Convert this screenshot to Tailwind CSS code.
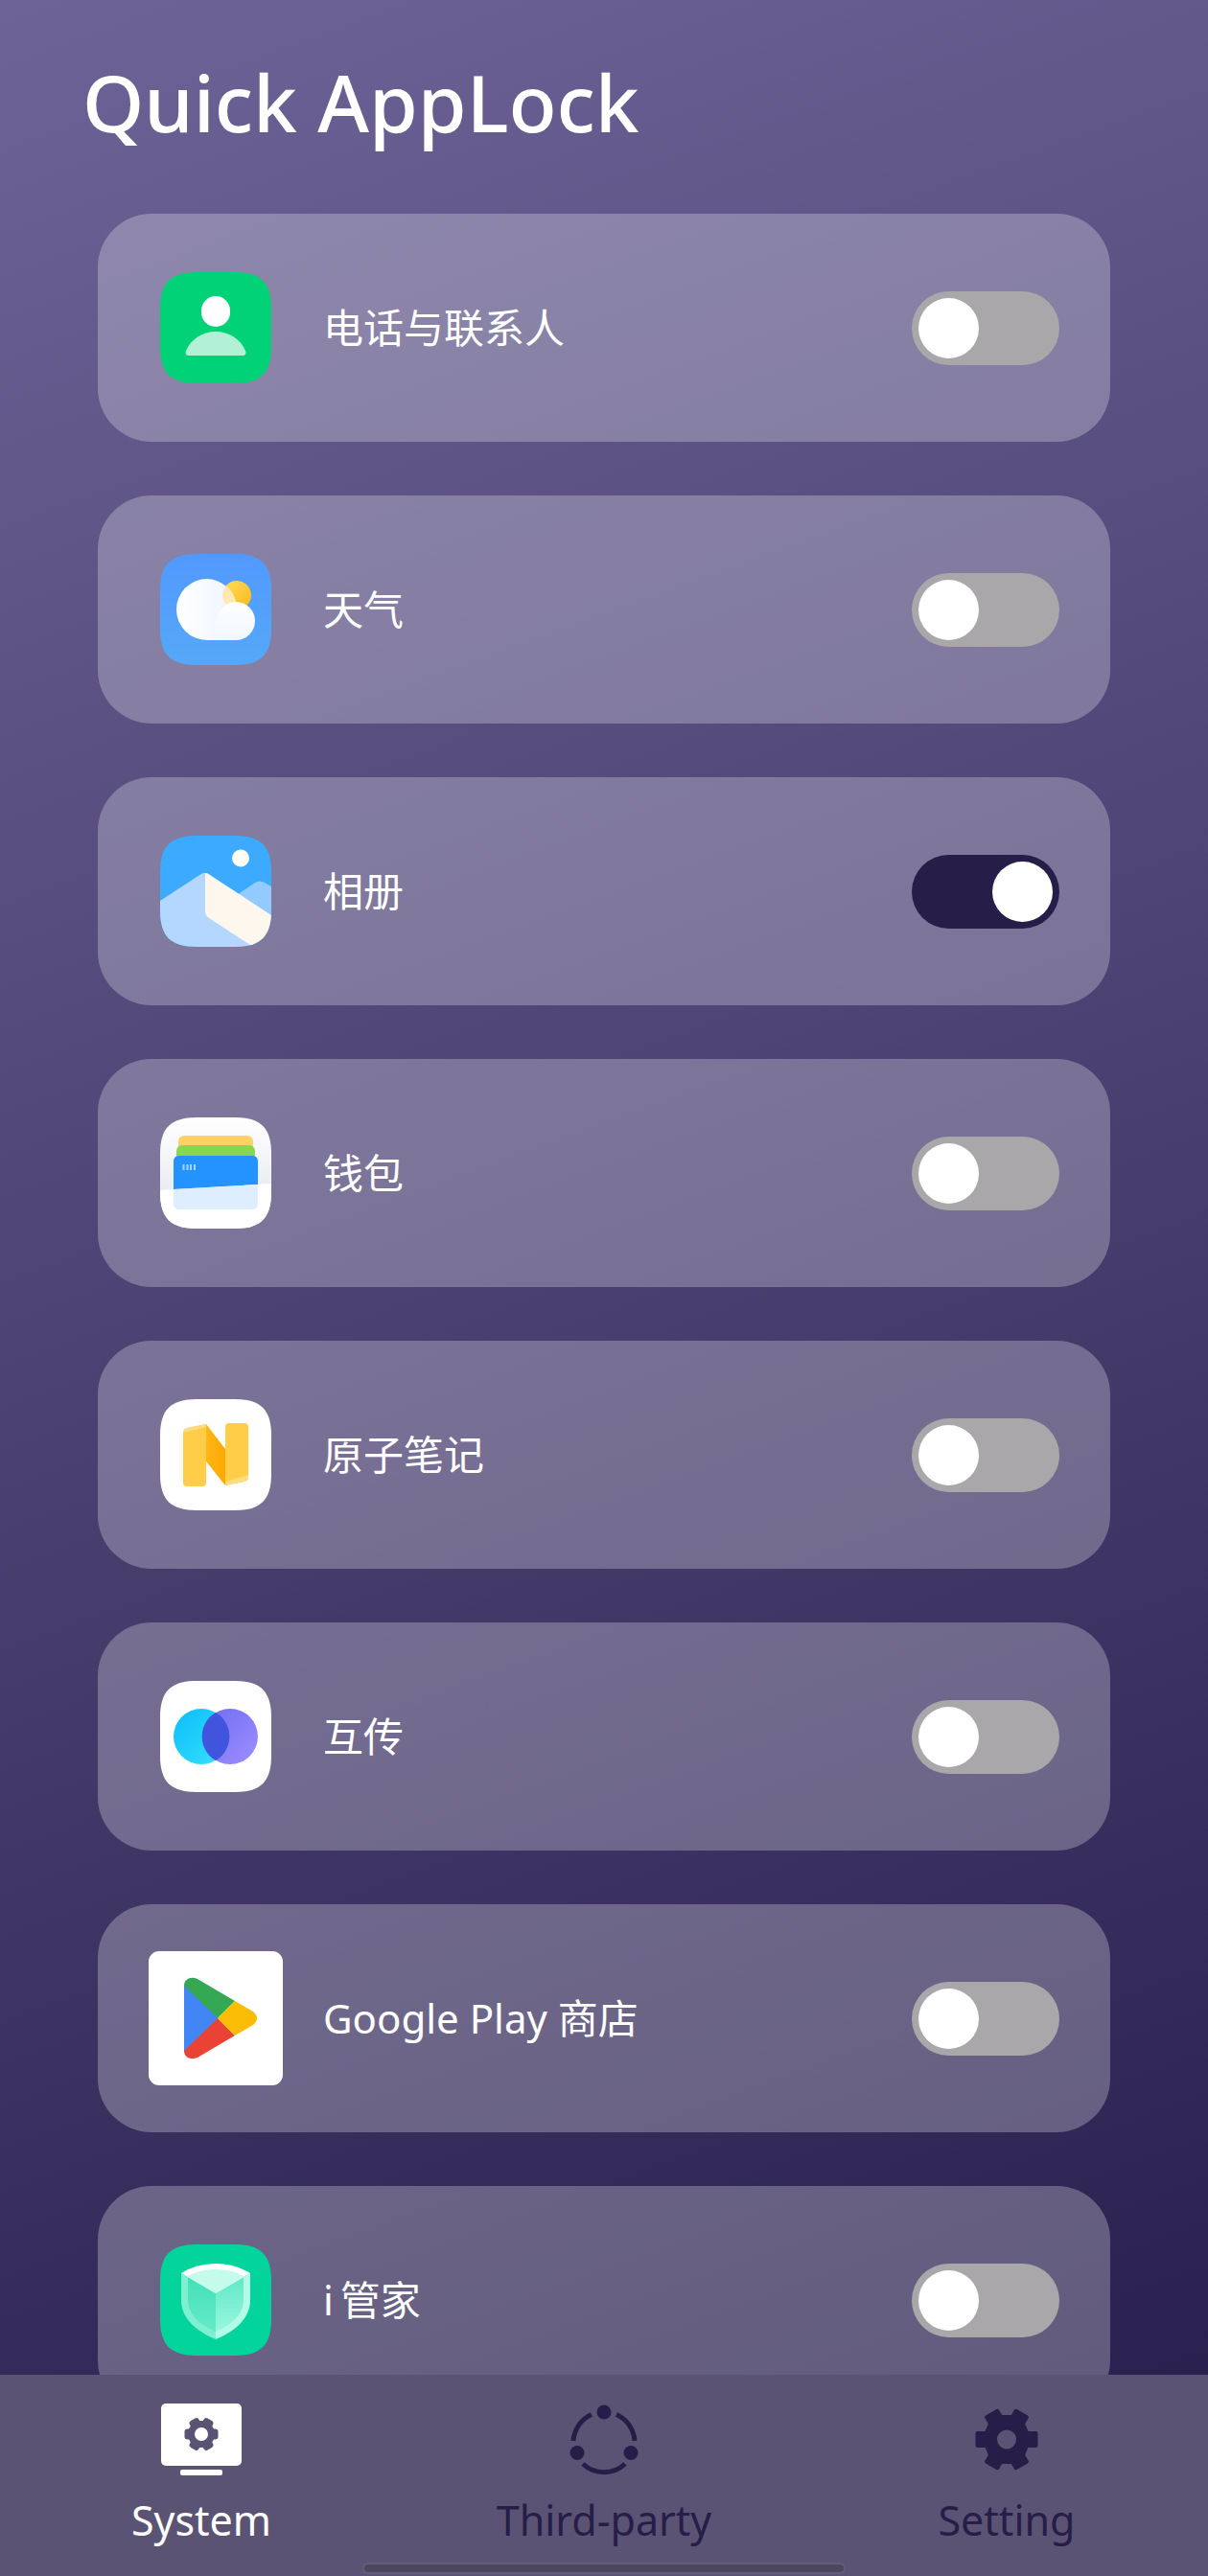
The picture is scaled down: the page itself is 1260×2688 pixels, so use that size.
<!DOCTYPE html>
<html lang="zh-CN">

<head>
    <meta charset="UTF-8">
    <meta name="viewport" content="width=device-width, initial-scale=1.0">
    <title>Quick AppLock</title>
    <script src="https://cdn.jsdelivr.net/npm/@tailwindcss/browser@4"></script>
</head>

<body class="flex h-screen flex-col overflow-hidden bg-[linear-gradient(160deg,#6d6396,#251c4a)] font-['Noto_Sans','Noto_Sans_CJK_SC',sans-serif] text-white">
    <!-- Shared shapes -->
    <svg class="absolute size-0" aria-hidden="true">
        <defs>
            <path id="tile" d="M0 38C0 11 11 0 38 0H78C105 0 116 11 116 38V78C116 105 105 116 78 116H38C11 116 0 105 0 78Z" />
            <clipPath id="tileClip"><use href="#tile" /></clipPath>
            <linearGradient id="weatherBg" x2="0" y2="1"><stop stop-color="#5299ff" /><stop offset="1" stop-color="#55a8f8" /></linearGradient>
            <linearGradient id="sun" x2="1" y2="1"><stop stop-color="#ffdc5e" /><stop offset="1" stop-color="#fbb917" /></linearGradient>
            <linearGradient id="cloud" x2="1" y2="0"><stop stop-color="#ffffff" /><stop offset="1" stop-color="#eef4fe" /></linearGradient>
            <linearGradient id="cloudSmall" x2="0" y2="1"><stop stop-color="#ffffff" /><stop offset="1" stop-color="#eff7ff" /></linearGradient>
            <linearGradient id="walletBg" x2="0" y2="1"><stop stop-color="#ffffff" /><stop offset="0.7" stop-color="#e9ebf2" /></linearGradient>
            <linearGradient id="fold" x2="1" y2="0"><stop stop-color="#ffb618" /><stop offset="1" stop-color="#fca800" /></linearGradient>
            <linearGradient id="cyan" x2="1" y2="1"><stop stop-color="#0bbdfb" /><stop offset="1" stop-color="#39e2fb" /></linearGradient>
            <linearGradient id="violet" x2="1" y2="1"><stop stop-color="#6c6cf2" /><stop offset="1" stop-color="#9f8fff" /></linearGradient>
            <linearGradient id="shieldLeft" x2="0" y2="1"><stop stop-color="#44e0b8" /><stop offset="1" stop-color="#64ebc8" /></linearGradient>
            <linearGradient id="shieldRight" x2="0" y2="1"><stop stop-color="#62e8c8" /><stop offset="1" stop-color="#98f7de" /></linearGradient>
        </defs>
    </svg>

    <h1 class="px-[86px] pt-[46px] text-[82px] leading-[120px] font-medium">Quick AppLock</h1>

    <!-- App list -->
    <main class="min-h-0 flex-1 overflow-y-auto px-[102px] pt-[57px] [scrollbar-width:none]">
        <ul class="flex flex-col gap-14">
            <li>
                <label class="flex h-[238px] items-center gap-[42px] rounded-[56px] bg-white/26 px-[53px]">
                    <span class="flex w-[140px] justify-center">
                        <svg class="size-[116px]" viewBox="0 0 116 116">
                            <use href="#tile" fill="#02d277" />
                            <rect x="43" y="25" width="30" height="32" rx="15" fill="#fff" />
                            <path d="M30 87C27 87 26 85 27 82C32 70 44 62 58 62C72 62 84 70 89 82C90 85 89 87 86 87Z" fill="#b3f1d6" />
                        </svg>
                    </span>
                    <span class="flex-1 text-[42px] leading-[60px]">电话与联系人</span>
                    <input type="checkbox" role="switch" class="h-[77px] w-[154px] appearance-none rounded-full bg-[#a9a7a9] p-[7px] before:block before:size-[63px] before:rounded-full before:bg-white checked:bg-[#261e48] checked:before:ml-auto">
                </label>
            </li>
            <li>
                <label class="flex h-[238px] items-center gap-[42px] rounded-[56px] bg-white/26 px-[53px]">
                    <span class="flex w-[140px] justify-center">
                        <svg class="size-[116px]" viewBox="0 0 116 116">
                            <use href="#tile" fill="url(#weatherBg)" />
                            <circle cx="80" cy="43" r="15" fill="url(#sun)" />
                            <path d="M49 26A32 32 0 1 0 49 90H70L80 60A32 32 0 0 0 49 26Z" fill="url(#cloud)" />
                            <path d="M66 38A15 15 0 0 0 78 58L79 51A32 32 0 0 0 69 33Z" fill="#ffe9b0" />
                            <path d="M79 50A20 20 0 0 1 79 90H60A20 20 0 0 1 60 66A20 20 0 0 1 79 50Z" fill="url(#cloudSmall)" />
                        </svg>
                    </span>
                    <span class="flex-1 text-[42px] leading-[60px]">天气</span>
                    <input type="checkbox" role="switch" class="h-[77px] w-[154px] appearance-none rounded-full bg-[#a9a7a9] p-[7px] before:block before:size-[63px] before:rounded-full before:bg-white checked:bg-[#261e48] checked:before:ml-auto">
                </label>
            </li>
            <li>
                <label class="flex h-[238px] items-center gap-[42px] rounded-[56px] bg-white/26 px-[53px]">
                    <span class="flex w-[140px] justify-center">
                        <svg class="size-[116px]" viewBox="0 0 116 116">
                            <g clip-path="url(#tileClip)">
                                <rect width="116" height="116" fill="#3caaff" />
                                <circle cx="84" cy="23.500" r="9" fill="#fffdf6" />
                                <path d="M80 62L99 49Q104 46 109 49L116 53V90Z" fill="#93caff" />
                                <path d="M0 68L42 40.500Q47 37 52 41L100 116H0Z" fill="#b4d7ff" />
                                <path d="M47 39Q49 39 52 41L116 83V116H97L51 86Q47 83 47 79Z" fill="#fef7ee" />
                            </g>
                        </svg>
                    </span>
                    <span class="flex-1 text-[42px] leading-[60px]">相册</span>
                    <input type="checkbox" role="switch" checked class="h-[77px] w-[154px] appearance-none rounded-full bg-[#a9a7a9] p-[7px] before:block before:size-[63px] before:rounded-full before:bg-white checked:bg-[#261e48] checked:before:ml-auto">
                </label>
            </li>
            <li>
                <label class="flex h-[238px] items-center gap-[42px] rounded-[56px] bg-white/26 px-[53px]">
                    <span class="flex w-[140px] justify-center">
                        <svg class="size-[116px]" viewBox="0 0 116 116">
                            <g clip-path="url(#tileClip)">
                                <rect width="116" height="116" fill="url(#walletBg)" />
                                <path d="M0 76L116 69V116H0Z" fill="#fff" />
                                <rect x="19" y="19" width="78" height="40" rx="6" fill="#ffd166" />
                                <rect x="17" y="29" width="82" height="40" rx="6" fill="#86d94f" />
                                <path d="M14 75V46Q14 40 20 40H96Q102 40 102 46V70Z" fill="#2492ff" />
                                <path d="M14 75L102 70V90Q102 96 96 96H20Q14 96 14 90Z" fill="#deeeff" />
                                <path d="M24.500 49V55M28.500 49V55M32 49V55M36 49V55" stroke="#a8d4ff" stroke-width="2" />
                            </g>
                        </svg>
                    </span>
                    <span class="flex-1 text-[42px] leading-[60px]">钱包</span>
                    <input type="checkbox" role="switch" class="h-[77px] w-[154px] appearance-none rounded-full bg-[#a9a7a9] p-[7px] before:block before:size-[63px] before:rounded-full before:bg-white checked:bg-[#261e48] checked:before:ml-auto">
                </label>
            </li>
            <li>
                <label class="flex h-[238px] items-center gap-[42px] rounded-[56px] bg-white/26 px-[53px]">
                    <span class="flex w-[140px] justify-center">
                        <svg class="size-[116px]" viewBox="0 0 116 116">
                            <use href="#tile" fill="#fff" />
                            <path d="M24 35Q24 31 28 30L48 26V87Q48 91 44 91H28Q24 91 24 87Z" fill="#ffcd48" />
                            <path d="M28 30L48 26V29L24 35Q24 31 28 30Z" fill="#ffdc80" />
                            <path d="M68 29Q68 25 72 25H88Q92 25 92 29V81Q92 85 88 86L68 90Z" fill="#ffcd48" />
                            <path d="M92 79V81Q92 85 88 86L68 90V86Z" fill="#ffdc80" />
                            <path d="M48 26L68 52V90L48 65Z" fill="url(#fold)" />
                        </svg>
                    </span>
                    <span class="flex-1 text-[42px] leading-[60px]">原子笔记</span>
                    <input type="checkbox" role="switch" class="h-[77px] w-[154px] appearance-none rounded-full bg-[#a9a7a9] p-[7px] before:block before:size-[63px] before:rounded-full before:bg-white checked:bg-[#261e48] checked:before:ml-auto">
                </label>
            </li>
            <li>
                <label class="flex h-[238px] items-center gap-[42px] rounded-[56px] bg-white/26 px-[53px]">
                    <span class="flex w-[140px] justify-center">
                        <svg class="size-[116px]" viewBox="0 0 116 116">
                            <use href="#tile" fill="#fff" />
                            <circle cx="43" cy="58" r="29" fill="url(#cyan)" />
                            <circle cx="73" cy="58" r="29" fill="url(#violet)" />
                            <path d="M58 33A29 29 0 0 1 58 83A29 29 0 0 1 58 33Z" fill="#4054de" />
                        </svg>
                    </span>
                    <span class="flex-1 text-[42px] leading-[60px]">互传</span>
                    <input type="checkbox" role="switch" class="h-[77px] w-[154px] appearance-none rounded-full bg-[#a9a7a9] p-[7px] before:block before:size-[63px] before:rounded-full before:bg-white checked:bg-[#261e48] checked:before:ml-auto">
                </label>
            </li>
            <li>
                <label class="flex h-[238px] items-center gap-[42px] rounded-[56px] bg-white/26 px-[53px]">
                    <span class="flex w-[140px] justify-center">
                        <svg class="size-[140px]" viewBox="0 0 140 140">
                            <rect width="140" height="140" rx="11" fill="#fff" />
                            <path d="M37 35L73 70L37 105Z" fill="#4285f4" />
                            <path d="M37 36C37 29 44 26 51 29L90 52L72 70Z" fill="#34a853" />
                            <path d="M37 104C37 111 44 114 51 111L90 88L72 70Z" fill="#ea4335" />
                            <path d="M90 52L109 63Q117 70 109 77L90 88L72 70Z" fill="#fbbc04" />
                        </svg>
                    </span>
                    <span class="flex-1 text-[42px] leading-[60px]">Google Play 商店</span>
                    <input type="checkbox" role="switch" class="h-[77px] w-[154px] appearance-none rounded-full bg-[#a9a7a9] p-[7px] before:block before:size-[63px] before:rounded-full before:bg-white checked:bg-[#261e48] checked:before:ml-auto">
                </label>
            </li>
            <li>
                <label class="flex h-[238px] items-center gap-[42px] rounded-[56px] bg-white/26 px-[53px]">
                    <span class="flex w-[140px] justify-center">
                        <svg class="size-[116px]" viewBox="0 0 116 116">
                            <use href="#tile" fill="#02d49c" />
                            <path d="M22 30L58 51V99C36 90 22 76 22 58Z" fill="#7eefd0" />
                            <path d="M94 30L58 51V99C80 90 94 76 94 58Z" fill="#b2fbe7" />
                            <path d="M29 34L58 51V91C40 83 29 73 29 57Z" fill="url(#shieldLeft)" />
                            <path d="M87 34L58 51V91C76 83 87 73 87 57Z" fill="url(#shieldRight)" />
                            <path d="M22 30Q38 20 58 20Q78 20 94 30L58 51Z" fill="#fff" />
                            <path d="M28 33.500Q40 26 58 26Q76 26 88 33.500L58 51Z" fill="#c4fbea" />
                        </svg>
                    </span>
                    <span class="flex-1 text-[42px] leading-[60px]">i&thinsp;管家</span>
                    <input type="checkbox" role="switch" class="h-[77px] w-[154px] appearance-none rounded-full bg-[#a9a7a9] p-[7px] before:block before:size-[63px] before:rounded-full before:bg-white checked:bg-[#261e48] checked:before:ml-auto">
                </label>
            </li>
        </ul>
    </main>

    <!-- Bottom tabs -->
    <nav class="relative grid h-[210px] shrink-0 grid-cols-3 bg-[#5b5373] pt-[30px] text-[#261e48]">
        <a href="#system" class="flex flex-col items-center gap-4 text-white">
            <svg class="h-[76px] w-[84px]" viewBox="0 0 84 76">
                <rect width="84" height="65" rx="5" fill="currentColor" />
                <g fill="#5b5373">
                    <circle cx="42" cy="32" r="14" />
                    <rect x="24.500" y="26.500" width="35" height="11" rx="3" />
                    <rect x="24.500" y="26.500" width="35" height="11" rx="3" transform="rotate(60 42 32)" />
                    <rect x="24.500" y="26.500" width="35" height="11" rx="3" transform="rotate(120 42 32)" />
                </g>
                <circle cx="42" cy="32" r="7" fill="currentColor" />
                <rect x="20" y="69" width="44" height="6" rx="2" fill="currentColor" />
            </svg>
            <span class="text-[43px] leading-[60px]">System</span>
        </a>
        <a href="#third-party" class="flex flex-col items-center gap-4">
            <svg class="h-[76px] w-[84px]" viewBox="0 0 84 76" fill="currentColor">
                <circle cx="42" cy="9" r="7.500" />
                <circle cx="14" cy="51.500" r="7.500" />
                <circle cx="70" cy="51.500" r="7.500" />
                <path d="M10 39A32 32 0 0 1 29 11.500M55 11.500A32 32 0 0 1 74 39M20 63A32 32 0 0 0 64 63" fill="none" stroke="currentColor" stroke-width="5" />
            </svg>
            <span class="text-[43px] leading-[60px]">Third-party</span>
        </a>
        <a href="#setting" class="flex flex-col items-center gap-4">
            <svg class="h-[76px] w-[84px]" viewBox="0 0 84 76" fill="currentColor">
                <path d="M23 21L36 12H48L61 21L68 37L61 54L48 63H36L23 54L16 37Z" />
                <rect x="9.500" y="29" width="65" height="17" rx="2" />
                <rect x="9.500" y="29" width="65" height="17" rx="2" transform="rotate(60 42 37.500)" />
                <rect x="9.500" y="29" width="65" height="17" rx="2" transform="rotate(120 42 37.500)" />
                <circle cx="42" cy="37.500" r="10" fill="#5b5373" />
            </svg>
            <span class="text-[43px] leading-[60px]">Setting</span>
        </a>
        <div class="absolute bottom-[2px] left-1/2 h-3 w-2/5 -translate-x-1/2 rounded-full border-2 border-[#645c7d] bg-[#4d475e]"></div>
    </nav>
</body>

</html>
